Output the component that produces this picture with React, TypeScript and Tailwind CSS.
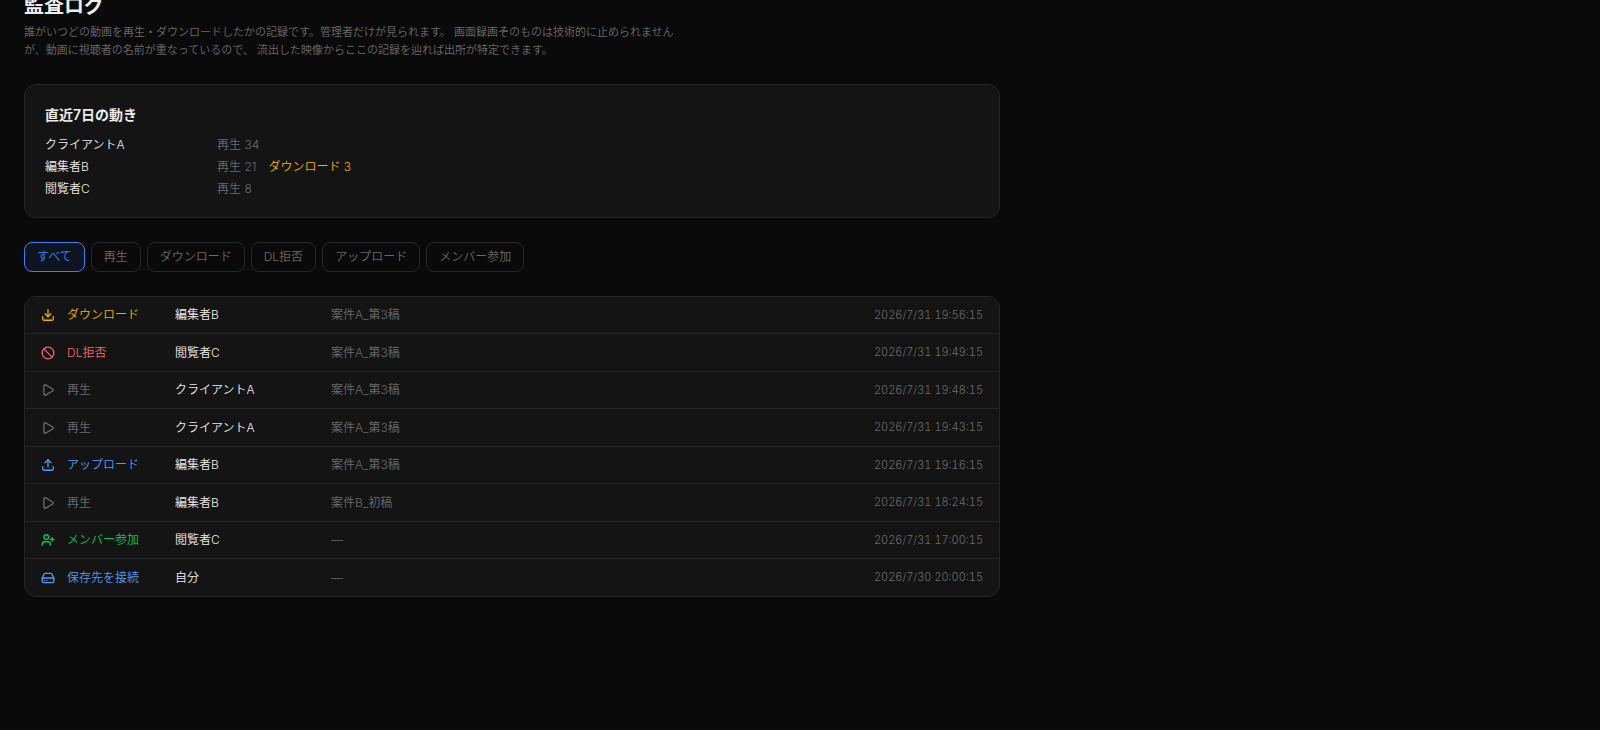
import { useState } from "react";
import { Ban, Download, HardDrive, Play, Upload, UserPlus, type LucideIcon } from "lucide-react";

type Kind = "download" | "denied" | "play" | "upload" | "join" | "storage";

const KINDS: Record<Kind, { label: string; icon: LucideIcon; color: string }> = {
  download: { label: "ダウンロード", icon: Download, color: "text-[#f0b100]" },
  denied: { label: "DL拒否", icon: Ban, color: "text-[#f8666a]" },
  play: { label: "再生", icon: Play, color: "text-[#6b6b6b]" },
  upload: { label: "アップロード", icon: Upload, color: "text-[#519cf5]" },
  join: { label: "メンバー参加", icon: UserPlus, color: "text-[#05c95a]" },
  storage: { label: "保存先を接続", icon: HardDrive, color: "text-[#519cf5]" },
};

const FILTERS: Kind[] = ["play", "download", "denied", "upload", "join"];

const INTRO =
  "誰がいつどの動画を再生・ダウンロードしたかの記録です。管理者だけが見られます。 " +
  "画面録画そのものは技術的に止められませんが、動画に視聴者の名前が重なっているので、 " +
  "流出した映像からここの記録を辿れば出所が特定できます。";

const SUMMARY = [
  { name: "クライアントA", plays: 34, downloads: 0 },
  { name: "編集者B", plays: 21, downloads: 3 },
  { name: "閲覧者C", plays: 8, downloads: 0 },
];

const LOGS: { kind: Kind; user: string; target: string; at: string }[] = [
  { kind: "download", user: "編集者B", target: "案件A_第3稿", at: "2026/7/31 19:56:15" },
  { kind: "denied", user: "閲覧者C", target: "案件A_第3稿", at: "2026/7/31 19:49:15" },
  { kind: "play", user: "クライアントA", target: "案件A_第3稿", at: "2026/7/31 19:48:15" },
  { kind: "play", user: "クライアントA", target: "案件A_第3稿", at: "2026/7/31 19:43:15" },
  { kind: "upload", user: "編集者B", target: "案件A_第3稿", at: "2026/7/31 19:16:15" },
  { kind: "play", user: "編集者B", target: "案件B_初稿", at: "2026/7/31 18:24:15" },
  { kind: "join", user: "閲覧者C", target: "—", at: "2026/7/31 17:00:15" },
  { kind: "storage", user: "自分", target: "—", at: "2026/7/30 20:00:15" },
];

function FilterButton({ label, active, onClick }: { label: string; active: boolean; onClick: () => void }) {
  return (
    <button
      type="button"
      aria-pressed={active}
      onClick={onClick}
      className={`rounded-lg border px-3 py-1.5 text-xs ${
        active ? "border-[#3b82f6] bg-[#3b82f6]/10 text-[#3b82f6]" : "border-[#262626] text-[#6b6b6b]"
      }`}
    >
      {label}
    </button>
  );
}

export default function App() {
  const [filter, setFilter] = useState<Kind | null>(null);
  const rows = filter ? LOGS.filter((log) => log.kind === filter) : LOGS;

  return (
    <div className="min-h-screen overflow-hidden bg-[#0a0a0a] font-['Inter','Noto_Sans_CJK_JP',sans-serif] font-[350] text-[#ededed]">
      <main className="-mt-2 flex max-w-5xl flex-col gap-6 px-6 pb-6">
        <header>
          <h1 className="text-xl font-bold">監査ログ</h1>
          <p className="mt-1 max-w-[664px] text-[11px] leading-relaxed text-[#6b6b6b]">{INTRO}</p>
        </header>

        <section className="rounded-xl border border-[#262626] bg-[#141414] p-5">
          <h2 className="mb-3 text-sm font-semibold">直近7日の動き</h2>
          <ul className="flex flex-col gap-1.5 text-xs">
            {SUMMARY.map((s) => (
              <li key={s.name} className="flex gap-3">
                <span className="w-40 truncate">{s.name}</span>
                <span className="text-[#6b6b6b]">{`再生 ${s.plays}`}</span>
                {s.downloads > 0 && <span className="text-[#f0b100]">{`ダウンロード ${s.downloads}`}</span>}
              </li>
            ))}
          </ul>
        </section>

        <div className="flex flex-wrap gap-1.5">
          <FilterButton label="すべて" active={filter === null} onClick={() => setFilter(null)} />
          {FILTERS.map((kind) => (
            <FilterButton
              key={kind}
              label={KINDS[kind].label}
              active={filter === kind}
              onClick={() => setFilter(kind)}
            />
          ))}
        </div>

        <div className="overflow-hidden rounded-xl border border-[#262626] bg-[#141414]">
          <table aria-label="監査ログ" className="w-full table-fixed border-separate border-spacing-0 text-left text-xs">
            <colgroup>
              <col className="w-[150px]" />
              <col className="w-[156px]" />
              <col />
              <col className="w-40" />
            </colgroup>
            <tbody className="[&>tr:not(:last-child)>td]:border-b [&>tr:not(:last-child)>td]:border-[#262626]">
              {rows.map((log) => {
                const { label, icon: Icon, color } = KINDS[log.kind];
                return (
                  <tr key={log.at}>
                    <td className={`py-2.5 pl-4 ${color}`}>
                      <span className="flex items-center gap-3">
                        <Icon size={14} strokeWidth={2.25} aria-hidden="true" />
                        {label}
                      </span>
                    </td>
                    <td className="truncate">{log.user}</td>
                    <td className="truncate text-[#6b6b6b]">{log.target}</td>
                    <td className="py-2.5 pr-4 text-right text-[11px] leading-normal text-[#6b6b6b] tabular-nums">
                      <time className="block">{log.at}</time>
                    </td>
                  </tr>
                );
              })}
            </tbody>
          </table>
        </div>
      </main>
    </div>
  );
}
